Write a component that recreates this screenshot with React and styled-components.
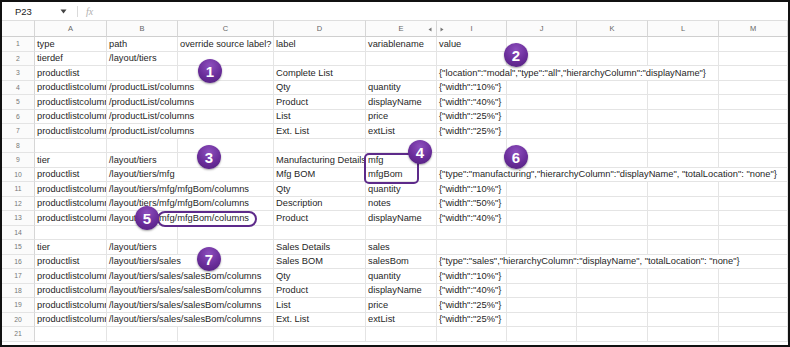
import styled, { createGlobalStyle } from "styled-components";

const GlobalStyle = createGlobalStyle`
  body {
    margin: 0;
    background: #fff;
    font-family: "Liberation Sans", Arial, sans-serif;
  }
`;

const COLS = "33px 72px 71px 96px 92px 71px 70px 70px 71px 71px 1fr";
const LETTERS = ["A", "B", "C", "D", "E", "I", "J", "K", "L", "M"];

const Frame = styled.div`
  position: relative;
  width: 790px;
  height: 347px;
  box-sizing: border-box;
  border: 2px solid #111;
  overflow: hidden;
  background: #fff;
`;

const Toolbar = styled.div`
  height: 18px;
  display: flex;
  align-items: center;
  font-size: 9.5px;
  color: #222;
`;

const NameBox = styled.div`
  width: 65px;
  padding-left: 13px;
  display: flex;
  align-items: center;
  justify-content: space-between;
  box-sizing: border-box;
`;

const Divider = styled.div`
  width: 1px;
  height: 11px;
  background: #dadada;
  margin: 0 8px 0 10px;
`;

const Fx = styled.span`
  font-family: "Liberation Serif", serif;
  font-style: italic;
  color: #b0b0b0;
  font-size: 10px;
`;

const Row = styled.div`
  display: grid;
  grid-template-columns: ${COLS};
  height: ${(p) => (p.$head ? "17px" : "14.5px")};
`;

const HeadCell = styled.div`
  position: relative;
  display: flex;
  align-items: center;
  justify-content: center;
  font-size: 7.5px;
  color: #666;
  background: #fbfbfb;
  border-top: 1px solid #dedede;
  border-right: 1px solid #d6d6d6;
  border-bottom: 1px solid #cfcfcf;
  box-sizing: border-box;
`;

const RowNum = styled.div`
  display: flex;
  align-items: center;
  justify-content: center;
  font-size: 6.8px;
  color: #777;
  background: #fbfbfb;
  border-right: 1px solid #d6d6d6;
  border-bottom: 1px solid #e4e4e4;
  box-sizing: border-box;
`;

const Cell = styled.div`
  grid-column: span ${(p) => p.$span || 1};
  display: flex;
  align-items: center;
  padding: 0 2px;
  font-size: 9.3px;
  color: #1f1f1f;
  white-space: nowrap;
  overflow: hidden;
  border-right: 1px solid #e4e4e4;
  border-bottom: 1px solid #e4e4e4;
  box-sizing: border-box;
`;

const Arrow = styled.svg`
  position: absolute;
  top: 6px;
  ${(p) => (p.$side === "left" ? "left: 3px;" : "right: 4px;")}
`;

const Badge = styled.div`
  position: absolute;
  width: 24px;
  height: 24px;
  margin: -12px 0 0 -12px;
  border-radius: 50%;
  background: radial-gradient(circle at 50% 28%, #8d4fbd 0%, #6a2d9a 55%, #4f1f7a 100%);
  box-shadow: 0 1px 2px rgba(0, 0, 0, 0.35);
  color: #fff;
  font-weight: 700;
  font-size: 15px;
  display: flex;
  align-items: center;
  justify-content: center;
  z-index: 3;
`;

const Outline = styled.div`
  position: absolute;
  border: 2px solid #5d2a8a;
  box-sizing: border-box;
  border-radius: ${(p) => p.$radius}px;
  z-index: 2;
`;

const W10 = '{"width":"10%"}';
const W25 = '{"width":"25%"}';
const W40 = '{"width":"40%"}';
const W50 = '{"width":"50%"}';
const PLC = "productlistcolumn";

const rows = [
  ["type", "path", "override source label?", "label", "variablename", "value"],
  ["tierdef", "/layout/tiers"],
  ["productlist", "", "", "Complete List", "", ['{"location":"modal","type":"all","hierarchyColumn":"displayName"}', 4]],
  [PLC, ["/productList/columns", 2], "Qty", "quantity", W10],
  [PLC, ["/productList/columns", 2], "Product", "displayName", W40],
  [PLC, ["/productList/columns", 2], "List", "price", W25],
  [PLC, ["/productList/columns", 2], "Ext. List", "extList", W25],
  [],
  ["tier", "/layout/tiers", "", "Manufacturing Details", "mfg"],
  ["productlist", ["/layout/tiers/mfg", 2], "Mfg BOM", "mfgBom", ['{"type":"manufacturing","hierarchyColumn":"displayName", "totalLocation": "none"}', 5]],
  [PLC, ["/layout/tiers/mfg/mfgBom/columns", 2], "Qty", "quantity", W10],
  [PLC, ["/layout/tiers/mfg/mfgBom/columns", 2], "Description", "notes", W50],
  [PLC, ["/layout/tiers/mfg/mfgBom/columns", 2], "Product", "displayName", W40],
  [],
  ["tier", "/layout/tiers", "", "Sales Details", "sales"],
  ["productlist", ["/layout/tiers/sales", 2], "Sales BOM", "salesBom", ['{"type":"sales","hierarchyColumn":"displayName", "totalLocation": "none"}', 5]],
  [PLC, ["/layout/tiers/sales/salesBom/columns", 2], "Qty", "quantity", W10],
  [PLC, ["/layout/tiers/sales/salesBom/columns", 2], "Product", "displayName", W40],
  [PLC, ["/layout/tiers/sales/salesBom/columns", 2], "List", "price", W25],
  [PLC, ["/layout/tiers/sales/salesBom/columns", 2], "Ext. List", "extList", W25],
  [],
];

// page coords of annotation badges (centre)
const badges = [
  [1, 210, 71],
  [2, 516, 55],
  [3, 209, 157],
  [4, 420, 152],
  [5, 147, 218],
  [6, 516, 157],
  [7, 209, 259],
];

const fillRow = (r) => {
  const out = [];
  let used = 0;
  r.forEach((c) => {
    const [text, span] = Array.isArray(c) ? c : [c, 1];
    out.push({ text, span });
    used += span;
  });
  while (used < 10) {
    out.push({ text: "", span: 1 });
    used++;
  }
  return out;
};

const Caret = () => (
  <svg width="7" height="5" viewBox="0 0 7 5">
    <path d="M0.5 0.5h6L3.5 4.5z" fill="#444" />
  </svg>
);

export default function App() {
  return (
    <Frame>
      <GlobalStyle />
      <Toolbar>
        <NameBox>
          <span>P23</span>
          <Caret />
        </NameBox>
        <Divider />
        <Fx>fx</Fx>
      </Toolbar>

      <Row $head>
        <HeadCell />
        {LETTERS.map((l) => (
          <HeadCell key={l}>
            {l}
            {l === "E" && (
              <Arrow width="4" height="5" viewBox="0 0 4 5">
                <path d="M3.5 0.5v4L0.5 2.5z" fill="#777" />
              </Arrow>
            )}
            {l === "I" && (
              <Arrow $side="left" width="4" height="5" viewBox="0 0 4 5">
                <path d="M0.5 0.5v4l3-2z" fill="#777" />
              </Arrow>
            )}
          </HeadCell>
        ))}
      </Row>

      {rows.map((r, i) => (
        <Row key={i}>
          <RowNum>{i + 1}</RowNum>
          {fillRow(r).map((c, j) => (
            <Cell key={j} $span={c.span}>
              {c.text}
            </Cell>
          ))}
        </Row>
      ))}

      <Outline $radius={5} style={{ left: 362, top: 151, width: 55, height: 31 }} />
      <Outline $radius={8} style={{ left: 155, top: 209, width: 100, height: 16 }} />

      {badges.map(([n, x, y]) => (
        <Badge key={n} style={{ left: x - 2, top: y - 2 }}>
          {n}
        </Badge>
      ))}
    </Frame>
  );
}
